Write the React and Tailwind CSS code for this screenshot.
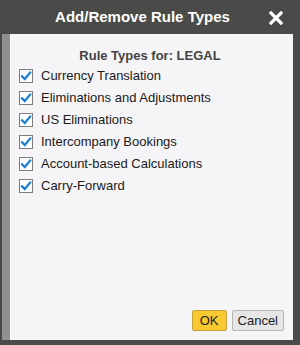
import React from "react";

const items = [
  "Currency Translation",
  "Eliminations and Adjustments",
  "US Eliminations",
  "Intercompany Bookings",
  "Account-based Calculations",
  "Carry-Forward",
];

function Check() {
  return (
    <span className="w-[14px] h-[14px] border border-[#7d7d7d] bg-white flex items-center justify-center shrink-0">
      <svg width="12" height="12" viewBox="0 0 12 12">
        <path d="M2 6.2 L4.8 9 L10.2 2.5" fill="none" stroke="#1a7fd4" strokeWidth="2.2" strokeLinecap="square" />
      </svg>
    </span>
  );
}

export default function App() {
  return (
    <div
      className="w-[300px] h-[345px] bg-[#4a4a48] flex flex-col overflow-hidden"
      style={{ fontFamily: '"Liberation Sans", Arial, sans-serif' }}
    >
      <div className="h-[34px] shrink-0 flex items-center relative">
        <div className="w-full text-center text-white font-bold text-[15px] pr-[15px]">Add/Remove Rule Types</div>
        <svg className="absolute right-[17px] top-[11px]" width="14" height="14" viewBox="0 0 14 14">
          <path d="M2 2 L12 12 M12 2 L2 12" stroke="white" strokeWidth="3.2" strokeLinecap="square" />
        </svg>
      </div>
      <div className="flex flex-1 min-h-0">
        <div className="w-[8px] ml-[2px] bg-[#8e9092] shrink-0" />
        <div className="flex-1 bg-[#f5f4f7] border-l border-white flex flex-col pl-[8px] pr-[9px]">
          <div className="text-center text-[#444] font-bold text-[13px] mt-[14px] pr-[3px] leading-[15px]">Rule Types for: LEGAL</div>
          <div className="flex flex-col mt-[2px]">
            {items.map((t) => (
              <div key={t} className="h-[22px] flex items-center gap-[8px]">
                <Check />
                <span className="text-[13px] text-[#1a1a1a]">{t}</span>
              </div>
            ))}
          </div>
          <div className="flex-1" />
          <div className="flex justify-end gap-[5px] mb-[9px]">
            <button className="h-[21px] px-[7px] bg-[#f8c931] border border-[#c6a03a] rounded-[2px] text-[13px] text-[#222]">OK</button>
            <button className="h-[21px] px-[5px] bg-[#e6e6e6] border border-[#b5b5b5] rounded-[2px] text-[13px] text-[#222]">Cancel</button>
          </div>
        </div>
        <div className="w-[7px] shrink-0" />
      </div>
      <div className="h-[5px] shrink-0" />
    </div>
  );
}
